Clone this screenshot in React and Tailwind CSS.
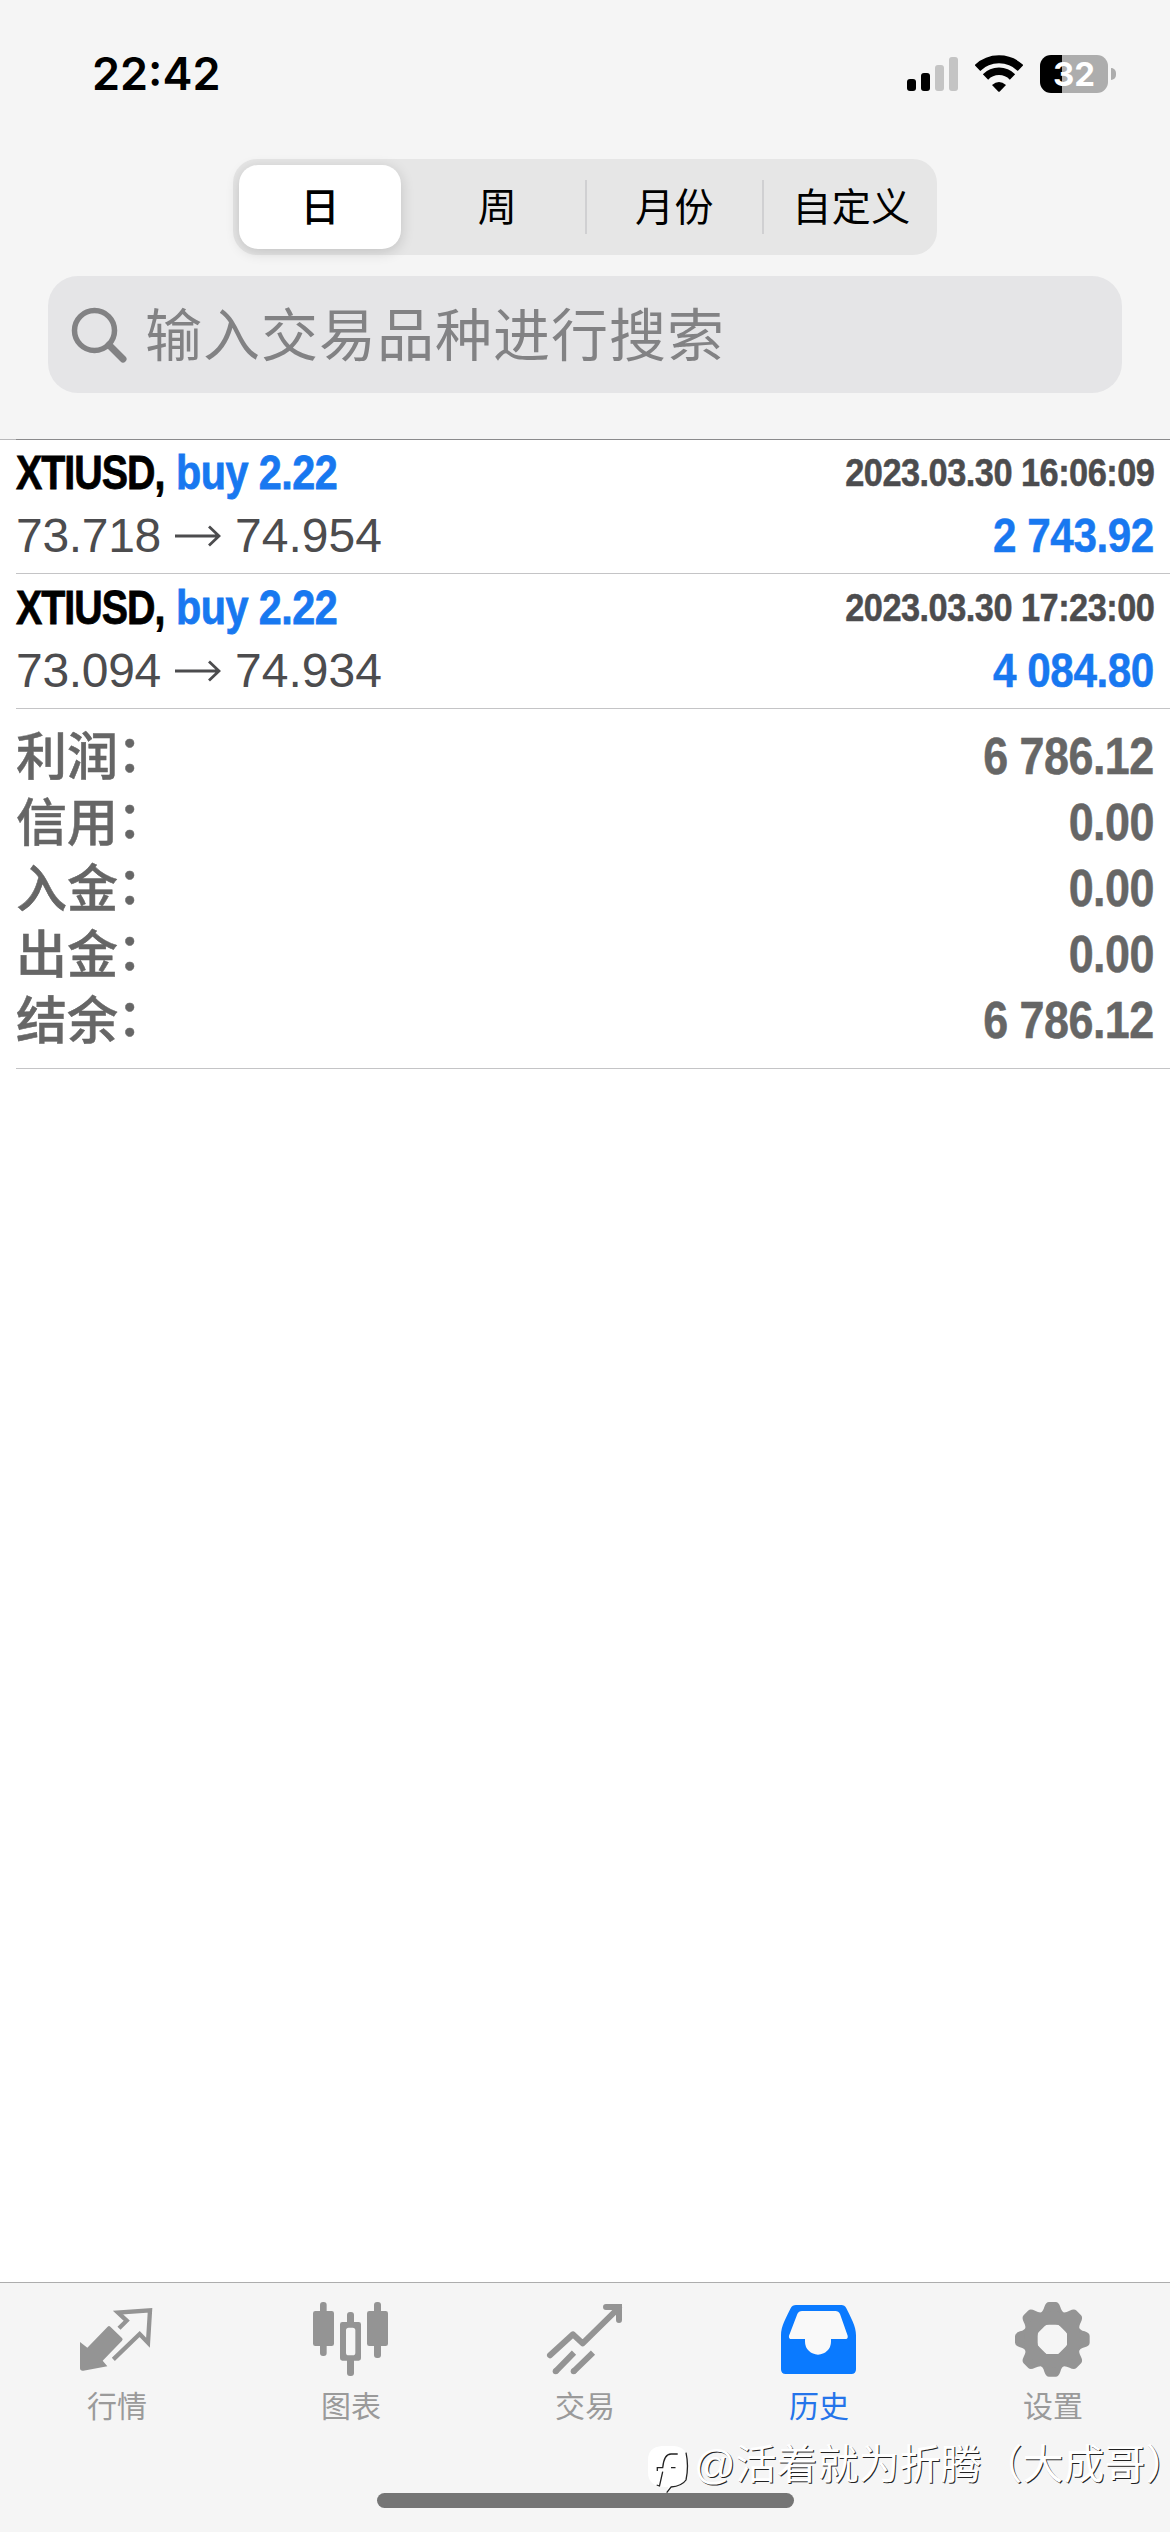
import { useState } from "react";

const deals = [
    { symbol: "XTIUSD", side: "buy 2.22", open: "73.718", close: "74.954", time: "2023.03.30 16:06:09", profit: "2 743.92" },
    { symbol: "XTIUSD", side: "buy 2.22", open: "73.094", close: "74.934", time: "2023.03.30 17:23:00", profit: "4 084.80" },
];

const totals = [
    { label: "利润", value: "6 786.12" },
    { label: "信用", value: "0.00" },
    { label: "入金", value: "0.00" },
    { label: "出金", value: "0.00" },
    { label: "结余", value: "6 786.12" },
];

const periods = ["日", "周", "月份", "自定义"];

const QuotesIcon = () => (
    <svg viewBox="0 0 252 252" className="w-[84px] h-[84px]" fill="none">
        <path d="M15 132L37 149L98 86Q102 82 106 86L141 120Q145 124 141 128L83 188L97 205L25 218Q15 219 15 211Z" fill="currentColor" />
        <path d="M132 91L155 68L129 44L225 37L219 134L194 108L115 184" stroke="currentColor" strokeWidth="13" />
    </svg>
);

const ChartIcon = () => (
    <svg viewBox="0 0 252 252" className="w-[84px] h-[84px]" fill="currentColor">
        <rect x="33" y="12" width="20" height="162" rx="9" />
        <rect x="12" y="39" width="63" height="105" rx="7" />
        <rect x="114" y="42" width="21" height="44" rx="9" />
        <rect x="114" y="174" width="21" height="60" rx="9" />
        <path fillRule="evenodd" d="M100 72H149Q156 72 156 79V181Q156 188 149 188H100Q93 188 93 181V79Q93 72 100 72ZM119 89Q111 89 111 97V164Q111 172 119 172H131Q139 172 139 164V97Q139 89 131 89Z" />
        <rect x="195" y="12" width="21" height="168" rx="9" />
        <rect x="174" y="39" width="63" height="105" rx="7" />
    </svg>
);

const TradeIcon = () => (
    <svg viewBox="0 0 252 252" className="w-[84px] h-[84px]" fill="none" stroke="currentColor" strokeWidth="18">
        <path d="M21 172L90 109L119 136L228 29" strokeLinecap="round" strokeLinejoin="round" />
        <path d="M189 27H228V66" strokeLinecap="round" />
        <path d="M38 220L93 164M92 220L150 164" />
        <circle cx="38" cy="220" r="9" fill="currentColor" stroke="none" />
        <circle cx="92" cy="220" r="9" fill="currentColor" stroke="none" />
    </svg>
);

const HistoryIcon = () => (
    <svg viewBox="0 0 252 252" className="w-[84px] h-[84px]">
        <path d="M57 21H193Q203 21 208 31C222 60 237 85 237 112V214Q237 228 223 228H26Q12 228 12 214V112C12 85 27 60 41 31Q46 21 57 21Z" fill="currentColor" />
        <path d="M75 39H175Q185 39 189 48L212 113Q214 123 204 123H162V131A39 39 0 0 1 84 131V123H44Q34 123 36 113L61 48Q65 39 75 39Z" fill="#f9f9f9" />
    </svg>
);

const SettingsIcon = () => (
    <svg viewBox="0 0 252 252" className="w-[84px] h-[84px]" fill="currentColor">
        {[0, 45, 90, 135, 180, 225, 270, 315].map((angle) => (
            <path key={angle} d="M86 46Q96 42 100 27Q105 12 114 12H134Q143 12 148 27Q152 42 162 46L150 80H98Z" transform={`rotate(${angle} 124 124)`} />
        ))}
        <circle cx="124" cy="124" r="66" fill="none" stroke="currentColor" strokeWidth="38" />
    </svg>
);

const tabs = [
    { label: "行情", Icon: QuotesIcon },
    { label: "图表", Icon: ChartIcon },
    { label: "交易", Icon: TradeIcon },
    { label: "历史", Icon: HistoryIcon },
    { label: "设置", Icon: SettingsIcon },
];

const StatusBar = () => (
    <div className="h-[159px] flex items-start justify-between pl-[92px] pr-[54px] pt-[46px]">
        <span className="font-['Inter'] font-semibold text-[45px] leading-[56px] text-black">22:42</span>
        <div className="flex items-start pt-[9px]">
            <svg viewBox="0 0 52 38" className="w-[52px] h-[38px] mr-4">
                <rect x="0" y="24" width="9" height="12" rx="3" />
                <rect x="14" y="18" width="9" height="18" rx="3" />
                <rect x="28" y="10" width="9" height="26" rx="3" fill="#c4c4c4" />
                <rect x="42" y="2" width="9" height="34" rx="3" fill="#c4c4c4" />
            </svg>
            <svg viewBox="0 0 48 38" className="w-[48px] h-[38px] mr-[17px]">
                <path d="M2.500 13A31 31 0 0 1 45.500 13" fill="none" stroke="#000" strokeWidth="8" />
                <path d="M10.500 22A19 19 0 0 1 37.500 22" fill="none" stroke="#000" strokeWidth="7.500" />
                <path d="M17 30Q24 24 31 30L25 36.300Q24 37.300 23 36.300Z" />
            </svg>
            <div className="flex items-center">
                <div className="w-[68px] h-[38px] rounded-[11px] bg-linear-to-r from-black from-[32%] to-[#adadad] to-[32%] flex items-center justify-center">
                    <span className="font-['Inter'] font-bold text-[33px] leading-none text-white">32</span>
                </div>
                <div className="ml-[3px] w-[5px] h-[12px] rounded-r-full bg-[#adadad]"></div>
            </div>
        </div>
    </div>
);

const DealRow = ({ deal }) => (
    <div className="ml-4 h-[135px] pr-4 border-t border-t-transparent first:border-t-[#8a8a8c] border-b border-b-[#c4c4c6] flex justify-between">
        <div className="flex flex-col w-[500px]">
            <div className="flex h-[68px] pt-[5px] leading-[56px] text-[48px] font-bold whitespace-nowrap [-webkit-text-stroke:0.8px]">
                <span className="w-[160px] text-black tracking-[-1.2px] origin-left scale-x-[0.82]">{deal.symbol},</span>
                <span className="text-[#1878f0] tracking-[-0.6px] origin-left scale-x-[0.86]">{deal.side}</span>
            </div>
            <div className="flex items-center h-[56px] text-[48px] text-[#4c4c4e]">
                <span className="tracking-[-0.3px]">{deal.open}</span>
                <svg viewBox="0 0 46 22" className="w-[46px] h-[22px] ml-[14px] mr-[14px]" fill="none" stroke="currentColor" strokeWidth="2.800">
                    <path d="M0 11H44M34 1.500L44 11L34 20.500" />
                </svg>
                <span>{deal.close}</span>
            </div>
        </div>
        <div className="flex flex-col items-end font-bold whitespace-nowrap">
            <span className="h-[68px] pt-[5px] text-[39.500px] leading-[54px] tracking-[-0.6px] text-[#4c4c4e] origin-right scale-x-[0.87] [-webkit-text-stroke:0.5px]">{deal.time}</span>
            <span className="text-[48px] leading-[56px] tracking-[-0.5px] text-[#1878f0] origin-right scale-x-[0.88] [-webkit-text-stroke:0.5px]">{deal.profit}</span>
        </div>
    </div>
);

const App = () => {
    const [period, setPeriod] = useState(0);
    const [activeTab, setActiveTab] = useState(3);

    return (
        <div className="relative w-[1170px] h-[2532px] overflow-hidden flex flex-col bg-white font-['Liberation_Sans','Noto_Sans_CJK_SC',sans-serif]">
            <header className="h-[440px] shrink-0 bg-[#f5f5f5] border-b border-[#b9b9bb]">
                <StatusBar />
                <div className="mx-auto w-[704px] h-[96px] rounded-[24px] bg-[#e6e6e6] flex items-center py-[6px] pl-[6px]">
                    {periods.map((name, index) => (
                        <div key={name} className="flex items-center h-full shrink-0">
                            {index > 0 && <div className={index > 1 ? "w-[2px] h-[54px] bg-[#d0d0d2]" : "w-[9px]"}></div>}
                            <button
                                onClick={() => setPeriod(index)}
                                className={
                                    index === period
                                        ? "w-[162px] h-full pt-[2px] rounded-[19px] bg-white shadow-[0_3px_14px_rgba(0,0,0,0.16)] text-[39px] font-medium"
                                        : "w-[175px] h-full pt-[2px] text-[39px] tracking-[0.5px]"
                                }
                            >
                                {name}
                            </button>
                        </div>
                    ))}
                </div>
                <div className="mt-[21px] mx-[48px] h-[117px] rounded-[30px] bg-[#e5e5e7] flex items-center pl-[23px] text-[#828284]">
                    <svg viewBox="0 0 56 56" className="w-[56px] h-[56px]" fill="none" stroke="currentColor" strokeWidth="5.500">
                        <circle cx="23.500" cy="23.500" r="20" />
                        <path d="M38 38L52 52" strokeWidth="7" strokeLinecap="round" />
                    </svg>
                    <span className="ml-[18px] pt-[4px] text-[57px] leading-none tracking-[1px]">输入交易品种进行搜索</span>
                </div>
            </header>

            <main className="flex-1 -mt-px">
                {deals.map((deal) => (
                    <DealRow key={deal.time} deal={deal} />
                ))}
                <div className="ml-4 pr-4 pt-[15px] h-[360px] border-b border-[#c4c4c6] text-[#666]">
                    {totals.map((row) => (
                        <div key={row.label} className="flex items-center justify-between h-[66px]">
                            <span className="pt-[2px] text-[51px] leading-[66px] font-medium whitespace-nowrap [-webkit-text-stroke:0.5px]">
                                {row.label}<span className="relative -left-px -top-[3px]">：</span>
                            </span>
                            <span className="text-[51px] leading-[66px] font-bold tracking-[-0.6px] origin-right scale-x-[0.88] [-webkit-text-stroke:0.5px]">{row.value}</span>
                        </div>
                    ))}
                </div>
            </main>

            <nav className="h-[250px] bg-[#f5f5f5] border-t border-[#adadad] grid grid-cols-5 items-start pt-[15px]">
                {tabs.map(({ label, Icon }, index) => (
                    <button
                        key={label}
                        onClick={() => setActiveTab(index)}
                        className={`flex flex-col items-center ${index === activeTab ? "text-[#0a7aff]" : "text-[#949494]"}`}
                    >
                        <Icon />
                        <span className={`mt-[4px] text-[30px] leading-[42px] ${index === activeTab ? "text-[#2474ea]" : "text-[#9a9a9a]"}`}>{label}</span>
                    </button>
                ))}
            </nav>

            <div className="absolute left-[377px] top-[2493px] w-[417px] h-[15px] rounded-full bg-[#757575]"></div>
            <div className="absolute left-[648px] top-[2440px] flex items-start whitespace-nowrap text-white">
                <svg viewBox="0 0 46 54" className="w-[46px] h-[54px]">
                    <path d="M14 6H26Q40 7 40 22V30Q40 44 26 46L19 53L20 47Q0 48 0 32V20Q0 7 14 6Z" fill="#fff" />
                    <path d="M9.300 31V27.700H14.700Q16 14 23 14H29.700M23 27.700H27.500M14.700 31.700L11.500 46L8.700 45M38 12.700Q41 26 38 40Q34 46 23 47L18.700 52.700" fill="none" stroke="#222" strokeWidth="1.300" />
                </svg>
                <span className="text-[41px] leading-[50px] [text-shadow:1px_1px_0_#222]">
                    @活着就为折腾（大成哥<span className="[font-feature-settings:'halt']">）</span>
                </span>
            </div>
        </div>
    );
};

export default App;
